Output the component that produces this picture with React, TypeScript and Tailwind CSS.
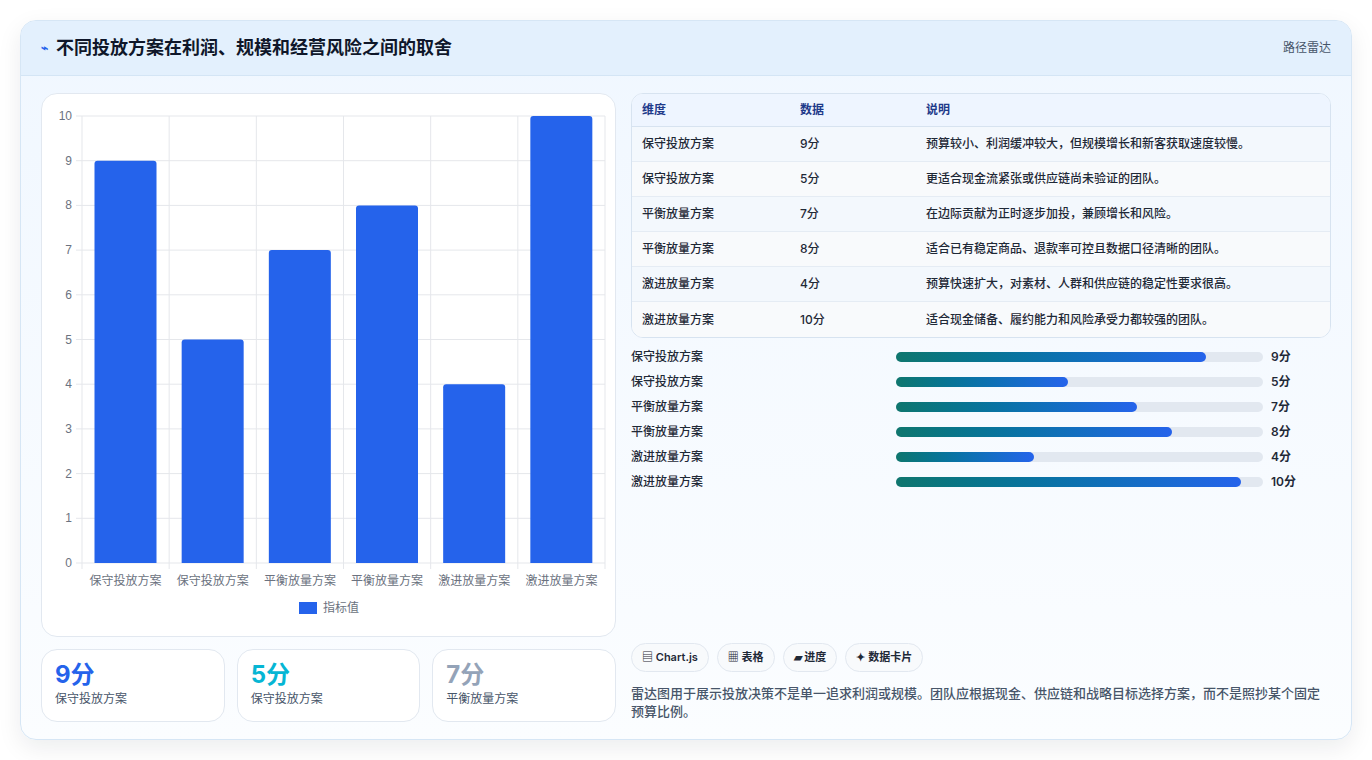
import React from "react";

const rows = [
  { name: "保守投放方案", v: 9, note: "预算较小、利润缓冲较大，但规模增长和新客获取速度较慢。" },
  { name: "保守投放方案", v: 5, note: "更适合现金流紧张或供应链尚未验证的团队。" },
  { name: "平衡放量方案", v: 7, note: "在边际贡献为正时逐步加投，兼顾增长和风险。" },
  { name: "平衡放量方案", v: 8, note: "适合已有稳定商品、退款率可控且数据口径清晰的团队。" },
  { name: "激进放量方案", v: 4, note: "预算快速扩大，对素材、人群和供应链的稳定性要求很高。" },
  { name: "激进放量方案", v: 10, note: "适合现金储备、履约能力和风险承受力都较强的团队。" },
];

function BarChart() {
  const left = 40, top = 22, w = 523, h = 447;
  const col = w / 6;
  return (
    <svg width="574" height="543" className="block">
      {Array.from({ length: 11 }).map((_, i) => {
        const y = top + h - (i * h) / 10;
        return (
          <g key={i}>
            <line x1={left - 6} x2={left + w} y1={y} y2={y} stroke="#e5e7eb" />
            <text x={left - 10} y={y + 4} textAnchor="end" fontSize="12" fill="#6b7280" fontFamily="Liberation Sans, sans-serif">{i}</text>
          </g>
        );
      })}
      {Array.from({ length: 7 }).map((_, i) => (
        <line key={i} x1={left + i * col} x2={left + i * col} y1={top} y2={top + h + 6} stroke="#e5e7eb" />
      ))}
      {rows.map((r, i) => {
        const bh = (r.v * h) / 10;
        const x = left + i * col + 12.5;
        return (
          <g key={i}>
            <path d={`M${x},${top + h} V${top + h - bh + 3} Q${x},${top + h - bh} ${x + 3},${top + h - bh} H${x + 59} Q${x + 62},${top + h - bh} ${x + 62},${top + h - bh + 3} V${top + h} Z`} fill="#2563eb" />
            <text x={left + i * col + col / 2} y={top + h + 22} textAnchor="middle" fontSize="12" fill="#6b7280" fontFamily="Liberation Sans, Noto Sans CJK SC, sans-serif">{r.name}</text>
          </g>
        );
      })}
      <rect x="257" y="508" width="18" height="12" fill="#2563eb" />
      <text x="281" y="518" fontSize="12" fill="#6b7280" fontFamily="Noto Sans CJK SC, sans-serif">指标值</text>
    </svg>
  );
}

export default function App() {
  return (
    <main className="w-[1372px] h-[760px] bg-white p-5 pb-5" style={{ fontFamily: "Inter, 'Noto Sans CJK SC', sans-serif" }}>
      <div className="h-[720px] rounded-2xl border border-[#d6e6f5] bg-gradient-to-b from-[#f0f7ff] to-[#fbfdff] shadow-[0_8px_24px_rgba(15,23,42,0.08)] overflow-hidden">
        <header className="h-[55px] flex items-center justify-between px-5 bg-[#e3f0fd] border-b border-[#d4e5f5]">
          <h1 className="flex items-center gap-2 text-lg font-bold text-[#0f172a]">
            <span className="text-[#2563eb] text-xs">⌁</span>不同投放方案在利润、规模和经营风险之间的取舍
          </h1>
          <span className="text-xs text-[#475569]">路径雷达</span>
        </header>
        <div className="flex gap-[15px] px-5 pt-[17px]">
          <div className="w-[575px] flex flex-col gap-3">
            <div className="h-[544px] rounded-2xl border border-[#e2e8f0] bg-white">
              <BarChart />
            </div>
            <div className="grid grid-cols-3 gap-3">
              {[["9分", "text-[#2563eb]"], ["5分", "text-[#06b6d4]"], ["7分", "text-[#94a3b8]"]].map(([v, c], i) => (
                <div key={i} className="h-[73px] rounded-2xl border border-[#e2e8f0] bg-white px-[13px] pt-[11px]">
                  <div className={`text-2xl font-bold leading-7 ${c}`}>{v}</div>
                  <div className="text-xs text-[#475569] mt-0.5">{rows[i].name}</div>
                </div>
              ))}
            </div>
          </div>
          <div className="w-[703px] flex flex-col">
            <div className="rounded-xl border border-[#d7e3f0] bg-white overflow-hidden text-xs">
              <div className="flex h-[33px] items-center bg-[#eef5ff] border-b border-[#d7e3f0] font-semibold text-[#1e3a8a]">
                <div className="w-[168px] pl-[10px]">维度</div>
                <div className="w-[126px]">数据</div>
                <div>说明</div>
              </div>
              {rows.map((r, i) => (
                <div key={i} className={`flex h-[35px] items-center text-[#1f2937] font-medium ${i < 5 ? "border-b border-[#e5ecf4]" : ""} ${i % 2 ? "bg-[#f8fafc]" : "bg-[#f3f8fd]"}`}>
                  <div className="w-[168px] pl-[10px]">{r.name}</div>
                  <div className="w-[126px]">{r.v}分</div>
                  <div>{r.note}</div>
                </div>
              ))}
            </div>
            <div className="flex flex-col gap-[11px] mt-[12px]">
              {rows.map((r, i) => (
                <div key={i} className="flex items-center h-[14px] text-xs font-medium text-[#1f2937]">
                  <div className="w-[265px]">{r.name}</div>
                  <div className="w-[367px] h-[10px] rounded-full bg-[#e2e8f0]">
                    <div className="h-full rounded-full bg-gradient-to-r from-[#0f766e] to-[#2563eb]" style={{ width: `${r.v * 9.4}%` }} />
                  </div>
                  <div className="ml-2 font-semibold">{r.v}分</div>
                </div>
              ))}
            </div>
            <div className="flex gap-2 mt-[154px] text-[11px] font-semibold text-[#1f2937]">
              {["▤ Chart.js", "▦ 表格", "▰ 进度", "✦ 数据卡片"].map((t) => (
                <span key={t} className="h-[29px] flex items-center px-[10px] rounded-full border border-[#e2e8f0] bg-[#f8fafc]">{t}</span>
              ))}
            </div>
            <p className="mt-[12px] text-[13px] leading-[18px] text-[#475569] font-medium">
              雷达图用于展示投放决策不是单一追求利润或规模。团队应根据现金、供应链和战略目标选择方案，而不是照抄某个固定预算比例。
            </p>
          </div>
        </div>
      </div>
    </main>
  );
}
